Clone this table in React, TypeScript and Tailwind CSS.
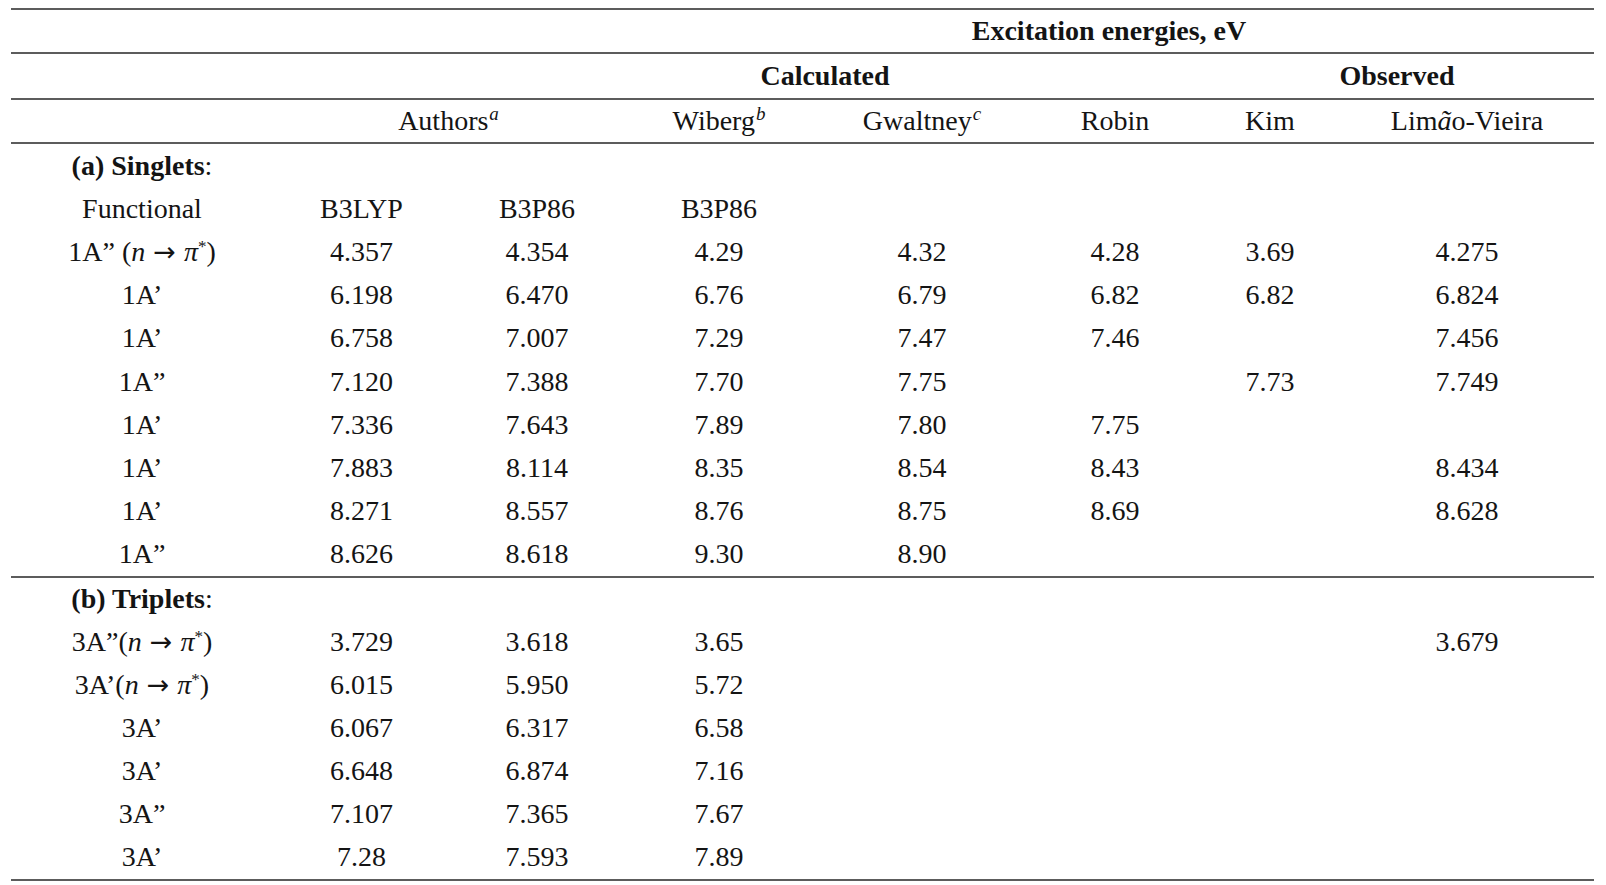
import React from 'react';

const cols = "grid grid-cols-[262px_177px_174px_190px_216px_170px_140px_254px]";

const Rule: React.FC = () => <div className="h-[2px] bg-[#5c5c5c]" />;

const Pi: React.FC<{ tight?: boolean }> = ({ tight }) => (
  <>
    {tight ? '' : ' '}(<i>n</i>
    <span className="inline-block font-['DejaVu_Sans',sans-serif] text-[27px] px-[8px] leading-none">→</span>
    <i>π</i>
    <sup className="text-[17px] -top-[9px]">*</sup>)
  </>
);

type Row = { label: React.ReactNode; values: string[] };

const singlets: Row[] = [
  { label: <>1A”<Pi /></>, values: ["4.357", "4.354", "4.29", "4.32", "4.28", "3.69", "4.275"] },
  { label: "1A’", values: ["6.198", "6.470", "6.76", "6.79", "6.82", "6.82", "6.824"] },
  { label: "1A’", values: ["6.758", "7.007", "7.29", "7.47", "7.46", "", "7.456"] },
  { label: "1A”", values: ["7.120", "7.388", "7.70", "7.75", "", "7.73", "7.749"] },
  { label: "1A’", values: ["7.336", "7.643", "7.89", "7.80", "7.75", "", ""] },
  { label: "1A’", values: ["7.883", "8.114", "8.35", "8.54", "8.43", "", "8.434"] },
  { label: "1A’", values: ["8.271", "8.557", "8.76", "8.75", "8.69", "", "8.628"] },
  { label: "1A”", values: ["8.626", "8.618", "9.30", "8.90", "", "", ""] },
];

const triplets: Row[] = [
  { label: <>3A”<Pi tight /></>, values: ["3.729", "3.618", "3.65", "", "", "", "3.679"] },
  { label: <>3A’<Pi tight /></>, values: ["6.015", "5.950", "5.72", "", "", "", ""] },
  { label: "3A’", values: ["6.067", "6.317", "6.58", "", "", "", ""] },
  { label: "3A’", values: ["6.648", "6.874", "7.16", "", "", "", ""] },
  { label: "3A”", values: ["7.107", "7.365", "7.67", "", "", "", ""] },
  { label: "3A’", values: ["7.28", "7.593", "7.89", "", "", "", ""] },
];

const DataRow: React.FC<{ row: Row; h: string }> = ({ row, h }) => (
  <div className={`${cols} ${h} items-center text-center`}>
    <div className="whitespace-nowrap">{row.label}</div>
    {row.values.map((v, i) => (
      <div key={i}>{v}</div>
    ))}
  </div>
);

const Sup: React.FC<{ children: React.ReactNode }> = ({ children }) => (
  <sup className="italic text-[19px] -top-[10px] ml-[1px]">{children}</sup>
);

export default function App() {
  return (
    <div className="w-[1606px] h-[885px] bg-white pt-[8px] overflow-hidden">
      <div className="ml-[11px] w-[1583px] text-[28px] text-[#141414] font-['Liberation_Serif',serif] leading-none">
        <Rule />
        <div className={`${cols} h-[42px] items-center text-center font-bold`}>
          <div className="col-start-4 col-span-5">Excitation energies, eV</div>
        </div>
        <Rule />
        <div className={`${cols} h-[44px] items-center text-center font-bold`}>
          <div className="col-start-3 col-span-4">Calculated</div>
          <div className="col-start-7 col-span-2">Observed</div>
        </div>
        <Rule />
        <div className={`${cols} h-[42px] items-center text-center`}>
          <div className="col-start-2 col-span-2">
            Authors<Sup>a</Sup>
          </div>
          <div>
            Wiberg<Sup>b</Sup>
          </div>
          <div>
            Gwaltney<Sup>c</Sup>
          </div>
          <div>Robin</div>
          <div>Kim</div>
          <div>
            Lim<i>ã</i>o-Vieira
          </div>
        </div>
        <Rule />
        <div className={`${cols} h-[43.2px] items-center text-center`}>
          <div>
            <b>(a) Singlets</b>:
          </div>
        </div>
        <div className={`${cols} h-[43.2px] items-center text-center`}>
          <div>Functional</div>
          <div>B3LYP</div>
          <div>B3P86</div>
          <div>B3P86</div>
        </div>
        {singlets.map((r, i) => (
          <DataRow key={i} row={r} h="h-[43.2px]" />
        ))}
        <Rule />
        <div className={`${cols} h-[43px] items-center text-center`}>
          <div>
            <b>(b) Triplets</b>:
          </div>
        </div>
        {triplets.map((r, i) => (
          <DataRow key={i} row={r} h="h-[43px]" />
        ))}
        <Rule />
      </div>
    </div>
  );
}
